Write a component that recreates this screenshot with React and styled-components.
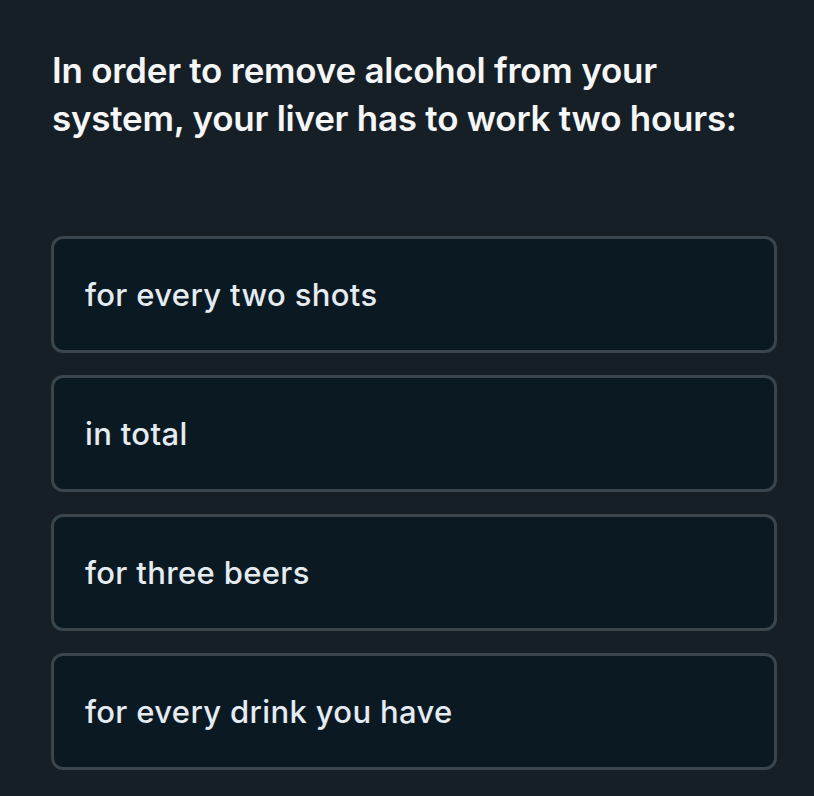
import React from "react"
import styled, { createGlobalStyle } from "styled-components"

const GlobalStyle = createGlobalStyle`
  html, body {
    margin: 0;
    padding: 0;
    background: #161f26;
  }
  body {
    font-family: Inter, "Noto Sans", sans-serif;
    -webkit-font-smoothing: antialiased;
  }
`

const Page = styled.div`
  min-height: 796px;
  box-sizing: border-box;
  padding: 46px 37px 0 51px;
  background: #161f26;
`

const Question = styled.h1`
  margin: 0 0 94px 1px;
  font-size: 35px;
  line-height: 48px;
  font-weight: 600;
  color: #f4f6f8;
  letter-spacing: -0.25px;
`

const Options = styled.ul`
  list-style: none;
  margin: 0;
  padding: 0;
  display: flex;
  flex-direction: column;
  gap: 22px;
`

const Option = styled.li`
  box-sizing: border-box;
  height: 117px;
  display: flex;
  align-items: center;
  padding: 0 31px;
  background: #0b1923;
  border: 3px solid #3a454e;
  border-radius: 12px;
  font-size: 31px;
  font-weight: 500;
  letter-spacing: 0.35px;
  color: #e4ecf2;
`

const options = [
  "for every two shots",
  "in total",
  "for three beers",
  "for every drink you have",
]

export default function App() {
  return (
    <Page>
      <GlobalStyle />
      <Question>
        In order to remove alcohol from your system, your liver has to work two hours:
      </Question>
      <Options>
        {options.map((o) => (
          <Option key={o}>{o}</Option>
        ))}
      </Options>
    </Page>
  )
}
